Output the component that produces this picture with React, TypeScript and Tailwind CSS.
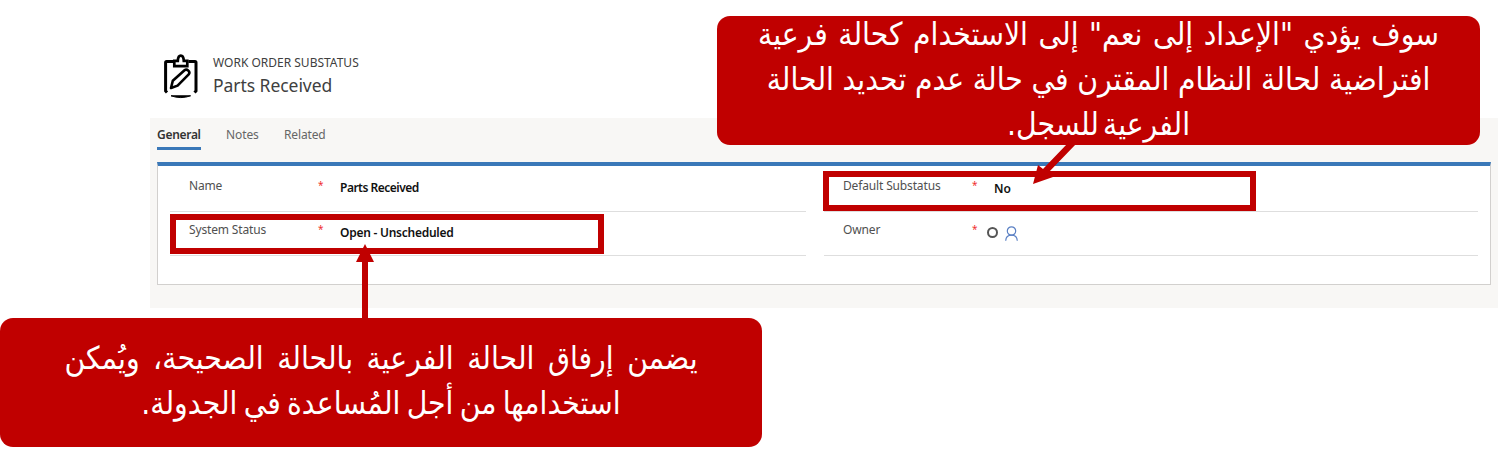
import type { ReactNode } from "react";

function ClipboardIcon() {
  return (
    <svg className="mt-[53px] h-[46px] w-9 shrink-0" viewBox="0 0 36 46" fill="none" stroke="#000" strokeWidth="3">
      <path d="M4 39.500 2.600 38V9.500q0-1 1-1H10M25.400 8.500H32q1 0 1 1V38L31.500 39.500" />
      <path d="M11.300 13.200V7.800H14.800C15.200.900 20.400.900 20.800 7.800H24.300V13.200Z" strokeWidth="2.700" />
      <path d="m8 35 1.800-7.200L21.500 17.300c2.500-2 6.300 1.500 4.200 4.100L14.600 32.600 8 35Z" strokeWidth="2.600" strokeLinejoin="round" />
      <path d="M8 42.800q9.800 3.600 19.600 0Z" strokeWidth="1" fill="#000" />
    </svg>
  );
}

function PersonIcon() {
  return (
    <svg className="ml-[7px] mt-[14px] h-[15px] w-[13px]" viewBox="0 0 13 15" fill="none" stroke="#5b80c4" strokeWidth="1.200">
      <circle cx="6.500" cy="5" r="4.200" />
      <path d="M.7 14.700c.2-3.500 2.400-5.500 5.800-5.500s5.600 2 5.800 5.500" />
    </svg>
  );
}

function Field({ label, children }: { label: string; children: ReactNode }) {
  return (
    <div className="flex h-11 border-b border-[#dedede] pl-[19px]">
      <div className="w-[129px] pt-[9px] text-[12px] leading-[18px] tracking-[-0.15px] text-[#505050]">{label}</div>
      <div className="w-[22px] pt-[8px] text-[10px] leading-[18px] text-[#f03030]">*</div>
      {children}
    </div>
  );
}

const latin = "font-['Noto_Sans','Open_Sans',sans-serif]";
const arabic = "font-['DejaVu_Sans_Condensed','DejaVu_Sans',sans-serif] [font-stretch:condensed]";
const callout =
  "flex h-[129px] flex-col items-center justify-center rounded-[13px] bg-[#c00000] pb-[3px] whitespace-nowrap text-[31.500px] leading-[45px] text-white";

export default function App() {
  return (
    <div className={`relative h-[450px] w-[1498px] overflow-hidden bg-white ${latin}`}>
      <header className="flex h-[118px] pl-[163px]">
        <ClipboardIcon />
        <div className="ml-[14px] pt-[53px] whitespace-nowrap text-[#404040]">
          <div className="text-[12px] leading-[19px]">WORK ORDER SUBSTATUS</div>
          <div className="text-[17.500px] leading-[26px] tracking-[-0.05px]">Parts Received</div>
        </div>
      </header>

      <main className="ml-[150px] h-[190px] bg-[#f8f7f5] pl-[7px]">
        <nav className="flex h-11 gap-[25px] pt-[8px] text-[12px] leading-[18px] text-[#666]">
          <div className="h-6 w-11 border-b-[3px] border-[#3a78b8] font-semibold text-[#333]">
            <span className="tracking-[-0.3px]">General</span>
          </div>
          <div className="w-[33px] tracking-[-0.1px]">Notes</div>
          <div className="tracking-[-0.15px]">Related</div>
        </nav>

        <section className="h-[123px] w-[1334px] border border-t-4 border-[#d2d0ce] border-t-[#3a78b8] bg-white pl-[12px]">
          <div className="flex gap-[18px] pt-[2px]">
            <div className="w-[636px]">
              <Field label="Name">
                <div className="pt-[11px] text-[12px] leading-[18px] font-semibold tracking-[-0.5px] text-[#111]">Parts Received</div>
              </Field>
              <Field label="System Status">
                <div className="pt-[12px] text-[12px] leading-[18px] font-semibold tracking-[-0.25px] text-[#111]">Open - Unscheduled</div>
              </Field>
            </div>
            <div className="w-[654px]">
              <Field label="Default Substatus">
                <div className="pt-[12px] text-[12px] leading-[18px] font-semibold text-[#111]">No</div>
              </Field>
              <Field label="Owner">
                <div className="-ml-[7px] mt-[15px] size-[11px] rounded-full border-2 border-[#555]" />
                <PersonIcon />
              </Field>
            </div>
          </div>
        </section>
      </main>

      <div className="absolute left-[170px] top-[214px] h-10 w-[434px] border-[6px] border-[#c00000]" />
      <div className="absolute left-[823px] top-[171px] h-10 w-[433px] border-[6px] border-[#c00000]" />
      <svg className="absolute left-0 top-0 h-[450px] w-[1498px]" viewBox="0 0 1498 450" fill="#c00000">
        <path d="M365 244 374 262H368V320H362V262H356Z" />
        <path d="m1033 184 5-19 5 4 24-25h9l-28 29 5 4Z" />
      </svg>

      <div dir="rtl" className={`absolute left-[717px] top-[16px] w-[763px] ${callout} ${arabic}`}>
        <div className="[word-spacing:1.5px]">سوف يؤدي "الإعداد إلى نعم" إلى الاستخدام كحالة فرعية</div>
        <div className="[word-spacing:-0.4px]">افتراضية لحالة النظام المقترن في حالة عدم تحديد الحالة</div>
        <div className="[word-spacing:-5px]">الفرعية للسجل.</div>
      </div>
      <div dir="rtl" className={`absolute left-0 top-[318px] w-[762px] ${callout} ${arabic}`}>
        <div className="[word-spacing:4.5px]">يضمن إرفاق الحالة الفرعية بالحالة الصحيحة، ويُمكن</div>
        <div className="[word-spacing:-2.8px]">استخدامها من أجل المُساعدة في الجدولة.</div>
      </div>
    </div>
  );
}
